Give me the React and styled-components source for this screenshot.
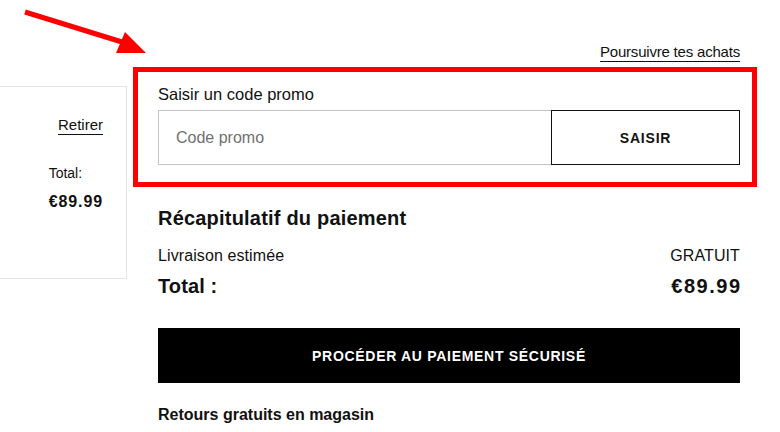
import React from "react";
import styled, { createGlobalStyle } from "styled-components";

const Global = createGlobalStyle`
  html, body { margin: 0; padding: 0; background: #fff; }
  body { font-family: "Liberation Sans", Arial, sans-serif; color: #111; overflow: hidden; }
  * { box-sizing: border-box; }
`;

const Page = styled.div`
  position: relative;
  width: 780px;
  height: 432px;
  display: flex;
  align-items: flex-start;
  gap: 31px;
`;

const CartCard = styled.div`
  margin-left: -113px;
  margin-top: 86px;
  width: 240px;
  height: 193px;
  border: 1px solid #e5e5e5;
  display: flex;
  flex-direction: column;
  align-items: flex-end;
  padding: 29px 23px 0 0;
`;

const UnderlineLink = styled.a`
  font-size: ${(p) => p.$size || 15}px;
  color: #111;
  text-decoration: none;
  border-bottom: 1.5px solid #111;
  line-height: 18px;
  letter-spacing: ${(p) => p.$ls ?? 0}px;
  cursor: pointer;
`;

const CardTotals = styled.div`
  margin-top: 30px;
  align-self: flex-end;
  display: flex;
  flex-direction: column;
  align-items: flex-start;
  gap: 12px;
`;

const SmallLabel = styled.span`
  font-size: 14px;
`;

const SmallPrice = styled.span`
  font-size: 16px;
  font-weight: 700;
  letter-spacing: 0.9px;
`;

const Column = styled.div`
  width: 582px;
  display: flex;
  flex-direction: column;
  padding-top: 43px;
`;

const TopLinkRow = styled.div`
  display: flex;
  justify-content: flex-end;
`;

const PromoSection = styled.section`
  position: relative;
  margin-top: 23px;
  display: flex;
  flex-direction: column;
  gap: 7px;
`;

const Highlight = styled.div`
  position: absolute;
  left: -25px;
  top: -18px;
  right: -17px;
  bottom: -22px;
  border: 5px solid #ff0000;
  pointer-events: none;
`;

const PromoLabel = styled.label`
  font-size: 16.5px;
  line-height: 18px;
`;

const PromoRow = styled.div`
  display: flex;
  height: 55px;
`;

const PromoInput = styled.input`
  flex: 1;
  min-width: 0;
  border: 1px solid #c4c4c4;
  border-right: none;
  padding: 0 17px;
  font-family: "Liberation Sans", Arial, sans-serif;
  font-size: 16px;
  color: #111;
  outline: none;
  &::placeholder { color: #707070; }
`;

const OutlineButton = styled.button`
  width: 189px;
  background: #fff;
  border: 1px solid #111;
  font-family: "Liberation Sans", Arial, sans-serif;
  font-weight: 700;
  font-size: 14px;
  color: #111;
  letter-spacing: 0.8px;
`;

const SummaryTitle = styled.h2`
  margin: 41px 0 0;
  font-size: 20px;
  line-height: 24px;
  font-weight: 700;
  letter-spacing: 0.2px;
`;

const SummaryRow = styled.div`
  display: flex;
  justify-content: space-between;
  align-items: baseline;
  margin-top: ${(p) => p.$mt}px;
  font-size: ${(p) => (p.$big ? 20 : 16)}px;
  font-weight: ${(p) => (p.$big ? 700 : 400)};
  letter-spacing: 0.1px;
  line-height: ${(p) => (p.$big ? 24 : 18)}px;
`;

const BigPrice = styled.span`
  letter-spacing: 1.5px;
  margin-right: -1.5px;
`;

const PrimaryButton = styled.button`
  margin-top: 30px;
  height: 55px;
  background: #000;
  color: #fff;
  border: none;
  font-family: "Liberation Sans", Arial, sans-serif;
  font-weight: 700;
  font-size: 14px;
  letter-spacing: 0.7px;
`;

const Note = styled.p`
  margin: 23px 0 0;
  font-size: 16px;
  font-weight: 700;
  line-height: 18px;
`;

const Arrow = styled.svg`
  position: absolute;
  left: 0;
  top: 0;
  pointer-events: none;
`;

export default function App() {
  return (
    <>
      <Global />
      <Page>
        <CartCard>
          <UnderlineLink $size={15}>Retirer</UnderlineLink>
          <CardTotals>
            <SmallLabel>Total:</SmallLabel>
            <SmallPrice>€89.99</SmallPrice>
          </CardTotals>
        </CartCard>
        <Column>
          <TopLinkRow>
            <UnderlineLink $size={15} $ls={-0.2}>Poursuivre tes achats</UnderlineLink>
          </TopLinkRow>
          <PromoSection>
            <Highlight />
            <PromoLabel>Saisir un code promo</PromoLabel>
            <PromoRow>
              <PromoInput placeholder="Code promo" />
              <OutlineButton>SAISIR</OutlineButton>
            </PromoRow>
          </PromoSection>
          <SummaryTitle>Récapitulatif du paiement</SummaryTitle>
          <SummaryRow $mt={17}>
            <span>Livraison estimée</span>
            <span>GRATUIT</span>
          </SummaryRow>
          <SummaryRow $big $mt={9}>
            <span>Total :</span>
            <BigPrice>€89.99</BigPrice>
          </SummaryRow>
          <PrimaryButton>PROCÉDER AU PAIEMENT SÉCURISÉ</PrimaryButton>
          <Note>Retours gratuits en magasin</Note>
        </Column>
        <Arrow width="160" height="60" viewBox="0 0 160 60">
          <line x1="25" y1="12" x2="122" y2="42" stroke="#ff0000" strokeWidth="5" />
          <polygon points="146,53 116,53 125,32" fill="#ff0000" />
        </Arrow>
      </Page>
    </>
  );
}
